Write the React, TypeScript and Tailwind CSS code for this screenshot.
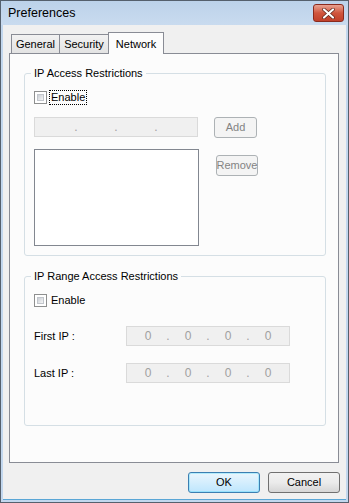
import React from "react";

const font = { fontFamily: '"Liberation Sans", Arial, sans-serif' };

const CheckBox = () => (
  <div className="w-[13px] h-[13px] border border-[#8e8f8f] bg-white p-[2px]">
    <div className="w-full h-full bg-gradient-to-br from-[#cbcfd5] to-[#f6f6f6] border border-[#c2c6cc]" />
  </div>
);

const IpField = ({ values, w }: { values: string[]; w: string }) => (
  <div
    className={`${w} h-[20px] border border-[#dadada] bg-[#f0f0f0] flex items-center pl-[16px] text-[#a0a0a0] text-[12px]`}
  >
    {values.map((v, i) => (
      <React.Fragment key={i}>
        <span className="w-[10px] text-center">{v}</span>
        {i < values.length - 1 && <span className="w-[30px] text-center">.</span>}
      </React.Fragment>
    ))}
  </div>
);

const DisabledButton = ({ label, w }: { label: string; w: string }) => (
  <div
    className={`${w} h-[21px] border border-[#adb2b5] rounded-[3px] bg-[#f4f4f4] flex items-center justify-center text-[11px] text-[#838383]`}
  >
    {label}
  </div>
);

const GroupBox = ({
  title,
  className,
  children,
}: {
  title: string;
  className: string;
  children: React.ReactNode;
}) => (
  <fieldset
    className={`border border-[#d5dfe5] rounded-[3px] ml-[14px] w-[302px] ${className}`}
  >
    <legend className="ml-[6px] px-[3px] text-[11px] text-black leading-[14px]">
      {title}
    </legend>
    {children}
  </fieldset>
);

export default function App() {
  return (
    <div
      className="w-[349px] h-[503px] border border-[#55606d] bg-[#c2d7ee] flex flex-col text-[11px] text-black"
      style={font}
    >
      {/* title bar */}
      <div className="h-[24px] flex items-center justify-between pl-[7px] pr-[4px] bg-gradient-to-b from-[#bcd2ea] to-[#c9dbef]">
        <span className="text-[12.5px] text-black pt-[1px]">Preferences</span>
        <div className="w-[31px] h-[18px] rounded-[3px] border border-[#8a2a1d] bg-gradient-to-b from-[#e8a291] via-[#d0553d] to-[#c1402a] flex items-center justify-center">
          <svg width="13" height="11" viewBox="0 0 13 11">
            <path
              d="M2 1.5 L11 9.5 M11 1.5 L2 9.5"
              stroke="#5a2419"
              strokeWidth="3.6"
              strokeLinecap="round"
            />
            <path
              d="M2 1.5 L11 9.5 M11 1.5 L2 9.5"
              stroke="#ffffff"
              strokeWidth="2.2"
              strokeLinecap="round"
            />
          </svg>
        </div>
      </div>

      {/* client area */}
      <div className="flex-1 mx-[2px] mb-[2px] bg-[#f0f0f0] flex flex-col pt-[7px] pl-[6px] border-b border-[#5aa6d6]">
        {/* tabs */}
        <div className="flex items-end h-[21px] pl-[2px] relative z-10">
          <div className="w-[49px] h-[19px] border border-[#898c95] border-b-0 bg-gradient-to-b from-[#f2f2f2] to-[#e3e3e3] flex items-center justify-center">
            General
          </div>
          <div className="w-[49px] h-[19px] border border-[#898c95] border-b-0 border-l-0 bg-gradient-to-b from-[#f2f2f2] to-[#e3e3e3] flex items-center justify-center">
            Security
          </div>
          <div className="w-[56px] h-[22px] -ml-[1px] mb-[-1px] border border-[#898c95] border-b-0 bg-[#fcfcfc] flex items-start justify-center pt-[3px]">
            Network
          </div>
        </div>

        {/* panel */}
        <div className="w-[330px] h-[410px] border border-[#898c95] bg-[#fcfcfc] pt-[12px]">
          <GroupBox title="IP Access Restrictions" className="h-[190px]">
            <div className="pl-[9px] pt-[10px]">
              <div className="flex items-center gap-[2px]">
                <CheckBox />
                <span className="border border-dotted border-black px-[1px] leading-[13px]">
                  Enable
                </span>
              </div>
              <div className="flex mt-[12px]">
                <div className="flex flex-col">
                  <IpField values={["", "", "", ""]} w="w-[164px]" />
                  <div className="w-[165px] h-[97px] border border-[#828790] bg-white mt-[12px]" />
                </div>
                <div className="flex flex-col ml-[15px]">
                  <DisabledButton label="Add" w="w-[43px]" />
                  <div className="ml-[2px] mt-[17px]">
                    <DisabledButton label="Remove" w="w-[42px]" />
                  </div>
                </div>
              </div>
            </div>
          </GroupBox>

          <GroupBox title="IP Range Access Restrictions" className="h-[157px] mt-[13px]">
            <div className="pl-[9px] pt-[10px]">
              <div className="flex items-center gap-[4px]">
                <CheckBox />
                <span className="leading-[14px]">Enable</span>
              </div>
              <div className="flex items-center mt-[19px]">
                <span className="w-[92px]">First IP :</span>
                <IpField values={["0", "0", "0", "0"]} w="w-[164px]" />
              </div>
              <div className="flex items-center mt-[17px]">
                <span className="w-[92px]">Last IP :</span>
                <IpField values={["0", "0", "0", "0"]} w="w-[164px]" />
              </div>
            </div>
          </GroupBox>
        </div>

        {/* buttons */}
        <div className="flex justify-end gap-[8px] mt-[9px] pr-[6px]">
          <div className="w-[72px] h-[21px] rounded-[3px] border border-[#3c7fb1] bg-gradient-to-b from-[#eaf6fd] to-[#bee6fd] shadow-[inset_0_0_0_1px_#48d7fb55] flex items-center justify-center">
            OK
          </div>
          <div className="w-[72px] h-[21px] rounded-[3px] border border-[#707070] bg-gradient-to-b from-[#f2f2f2] via-[#ebebeb] to-[#d6d6d6] flex items-center justify-center">
            Cancel
          </div>
        </div>
      </div>
    </div>
  );
}
